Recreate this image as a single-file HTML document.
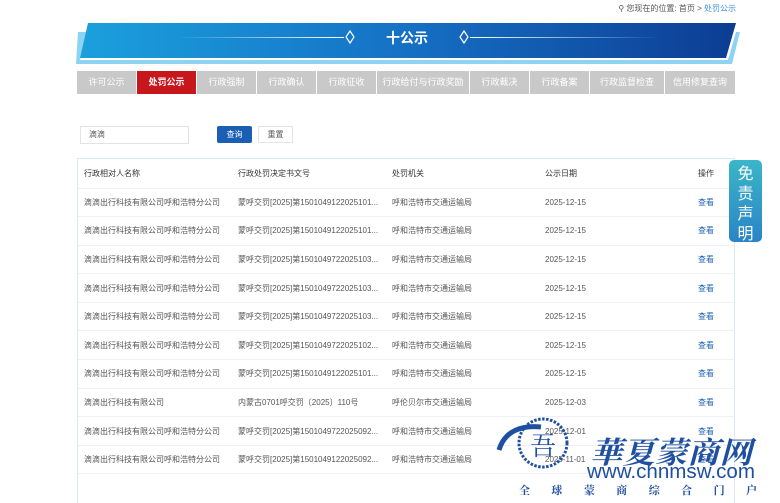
<!DOCTYPE html>
<html><head><meta charset="utf-8"><style>
*{margin:0;padding:0;box-sizing:border-box}
body{width:780px;height:498px;overflow:hidden;background:#fff;font-family:"Liberation Sans","Noto Sans CJK SC",sans-serif;position:relative;color:#333}
.abs{position:absolute}
.crumb{right:44px;top:3px;font-size:8px;color:#555}
.crumb span{color:#3a8ee6}
.tabs{left:77px;top:71px;height:23px;display:flex}
.tab{height:23px;background:#c9c9c9;color:#fff;font-size:9px;line-height:23px;text-align:center;margin-right:1px}
.tab.on{background:#c8161d;font-weight:bold}
table{border-collapse:collapse;font-size:8px;color:#555}
td{height:28.6px;border-bottom:1px solid #eef2f6;padding-left:6px;white-space:nowrap}
tr.h td{color:#333;height:29px}
a{color:#1a5fb4;text-decoration:none}
</style></head><body>
<div class="abs crumb">⚲ 您现在的位置: 首页 &gt; <span>处罚公示</span></div>
<svg class="abs" style="left:76px;top:20px" width="664" height="48">
<defs><linearGradient id="g" x1="0" x2="1"><stop offset="0" stop-color="#1ba0dd"/><stop offset="0.5" stop-color="#1570c4"/><stop offset="1" stop-color="#0c3d93"/></linearGradient>
<linearGradient id="l1" x1="0" x2="1"><stop offset="0" stop-color="#fff" stop-opacity="0"/><stop offset="1" stop-color="#fff"/></linearGradient>
<linearGradient id="l2" x1="0" x2="1"><stop offset="0" stop-color="#fff"/><stop offset="1" stop-color="#fff" stop-opacity="0"/></linearGradient></defs>
<polygon points="2,12 10,12 4,40 652,40 660,12 664,12 656,44 0,44" fill="#8fd3f2"/>
<polygon points="12,3 660,3 650,38 4,38" fill="url(#g)"/>
<rect x="100" y="17" width="168" height="1" fill="url(#l1)"/>
<rect x="394" y="17" width="190" height="1" fill="url(#l2)"/>
<polygon points="274,11 278,17 274,23 270,17" fill="none" stroke="#fff" stroke-width="1.2"/>
<polygon points="388,11 392,17 388,23 384,17" fill="none" stroke="#fff" stroke-width="1.2"/>
<text x="331" y="23" fill="#fff" font-size="14" font-weight="bold" text-anchor="middle" font-family="Noto Sans CJK SC">十公示</text>
</svg>
<div class="abs tabs">
<div class="tab" style="width:59px">许可公示</div><div class="tab on" style="width:59px">处罚公示</div><div class="tab" style="width:59px">行政强制</div><div class="tab" style="width:59px">行政确认</div><div class="tab" style="width:59px">行政征收</div><div class="tab" style="width:92px">行政给付与行政奖励</div><div class="tab" style="width:59px">行政裁决</div><div class="tab" style="width:59px">行政备案</div><div class="tab" style="width:74px">行政监督检查</div><div class="tab" style="width:70px;margin:0">信用修复查询</div>
</div>
<div class="abs" style="left:80px;top:126px;width:109px;height:18px;border:1px solid #e3e3e3;font-size:8px;line-height:16px;padding-left:8px;color:#555">滴滴</div>
<div class="abs" style="left:217px;top:126px;width:35px;height:17px;background:#1a5fb4;color:#fff;font-size:8px;line-height:17px;text-align:center;border-radius:2px">查询</div>
<div class="abs" style="left:258px;top:126px;width:35px;height:17px;border:1px solid #e3e3e3;color:#555;font-size:8px;line-height:15px;text-align:center">重置</div>
<div class="abs" style="left:77px;top:158px;width:658px;height:345px;border:1px solid #dbeaf7;border-bottom:none">
<table style="width:656px">
<colgroup><col style="width:154px"><col style="width:154px"><col style="width:153px"><col style="width:153px"><col></colgroup>
<tr class="h"><td>行政相对人名称</td><td>行政处罚决定书文号</td><td>处罚机关</td><td>公示日期</td><td>操作</td></tr>
<tr><td>滴滴出行科技有限公司呼和浩特分公司</td><td>蒙呼交罚[2025]第1501049122025101...</td><td>呼和浩特市交通运输局</td><td>2025-12-15</td><td><a>查看</a></td></tr>
<tr><td>滴滴出行科技有限公司呼和浩特分公司</td><td>蒙呼交罚[2025]第1501049122025101...</td><td>呼和浩特市交通运输局</td><td>2025-12-15</td><td><a>查看</a></td></tr>
<tr><td>滴滴出行科技有限公司呼和浩特分公司</td><td>蒙呼交罚[2025]第1501049722025103...</td><td>呼和浩特市交通运输局</td><td>2025-12-15</td><td><a>查看</a></td></tr>
<tr><td>滴滴出行科技有限公司呼和浩特分公司</td><td>蒙呼交罚[2025]第1501049722025103...</td><td>呼和浩特市交通运输局</td><td>2025-12-15</td><td><a>查看</a></td></tr>
<tr><td>滴滴出行科技有限公司呼和浩特分公司</td><td>蒙呼交罚[2025]第1501049722025103...</td><td>呼和浩特市交通运输局</td><td>2025-12-15</td><td><a>查看</a></td></tr>
<tr><td>滴滴出行科技有限公司呼和浩特分公司</td><td>蒙呼交罚[2025]第1501049722025102...</td><td>呼和浩特市交通运输局</td><td>2025-12-15</td><td><a>查看</a></td></tr>
<tr><td>滴滴出行科技有限公司呼和浩特分公司</td><td>蒙呼交罚[2025]第1501049122025101...</td><td>呼和浩特市交通运输局</td><td>2025-12-15</td><td><a>查看</a></td></tr>
<tr><td>滴滴出行科技有限公司</td><td>内蒙古0701呼交罚〔2025〕110号</td><td>呼伦贝尔市交通运输局</td><td>2025-12-03</td><td><a>查看</a></td></tr>
<tr><td>滴滴出行科技有限公司呼和浩特分公司</td><td>蒙呼交罚[2025]第1501049722025092...</td><td>呼和浩特市交通运输局</td><td>2025-12-01</td><td><a>查看</a></td></tr>
<tr><td>滴滴出行科技有限公司呼和浩特分公司</td><td>蒙呼交罚[2025]第1501049122025092...</td><td>呼和浩特市交通运输局</td><td>2025-11-01</td><td><a>查看</a></td></tr>
</table></div>
<div class="abs" style="left:729px;top:160px;width:33px;height:82px;border-radius:5px;background:linear-gradient(#3ab6c8,#2a84c6);color:#fff;font-size:16px;line-height:20px;text-align:center;padding-top:2px;font-family:'Noto Sans CJK SC',sans-serif">免<br>责<br>声<br>明</div>
<svg class="abs" style="left:495px;top:405px" width="285" height="93">
<circle cx="48" cy="38" r="24" fill="none" stroke="#1f4fa0" stroke-width="3" stroke-dasharray="2.5 1.5"/>
<path d="M4,45 C10,25 28,20 46,22" fill="none" stroke="#1f4fa0" stroke-width="5"/>
<text x="48" y="50" font-size="26" fill="#1f4fa0" text-anchor="middle" font-family="Noto Serif CJK SC">吾</text>
<text x="95" y="58" font-size="30" fill="#1f4fa0" font-weight="bold" font-family="Noto Serif CJK SC" textLength="162" lengthAdjust="spacingAndGlyphs" font-style="italic">華夏蒙商网</text>
<text x="92" y="73" font-size="20" fill="#1f4fa0" font-family="Liberation Sans" textLength="168" lengthAdjust="spacingAndGlyphs">www.chnmsw.com</text>
<text x="24" y="89" font-size="11" fill="#1f4fa0" font-weight="bold" font-family="Noto Serif CJK SC" textLength="238">全球蒙商综合门户</text>
</svg>
</body></html>
